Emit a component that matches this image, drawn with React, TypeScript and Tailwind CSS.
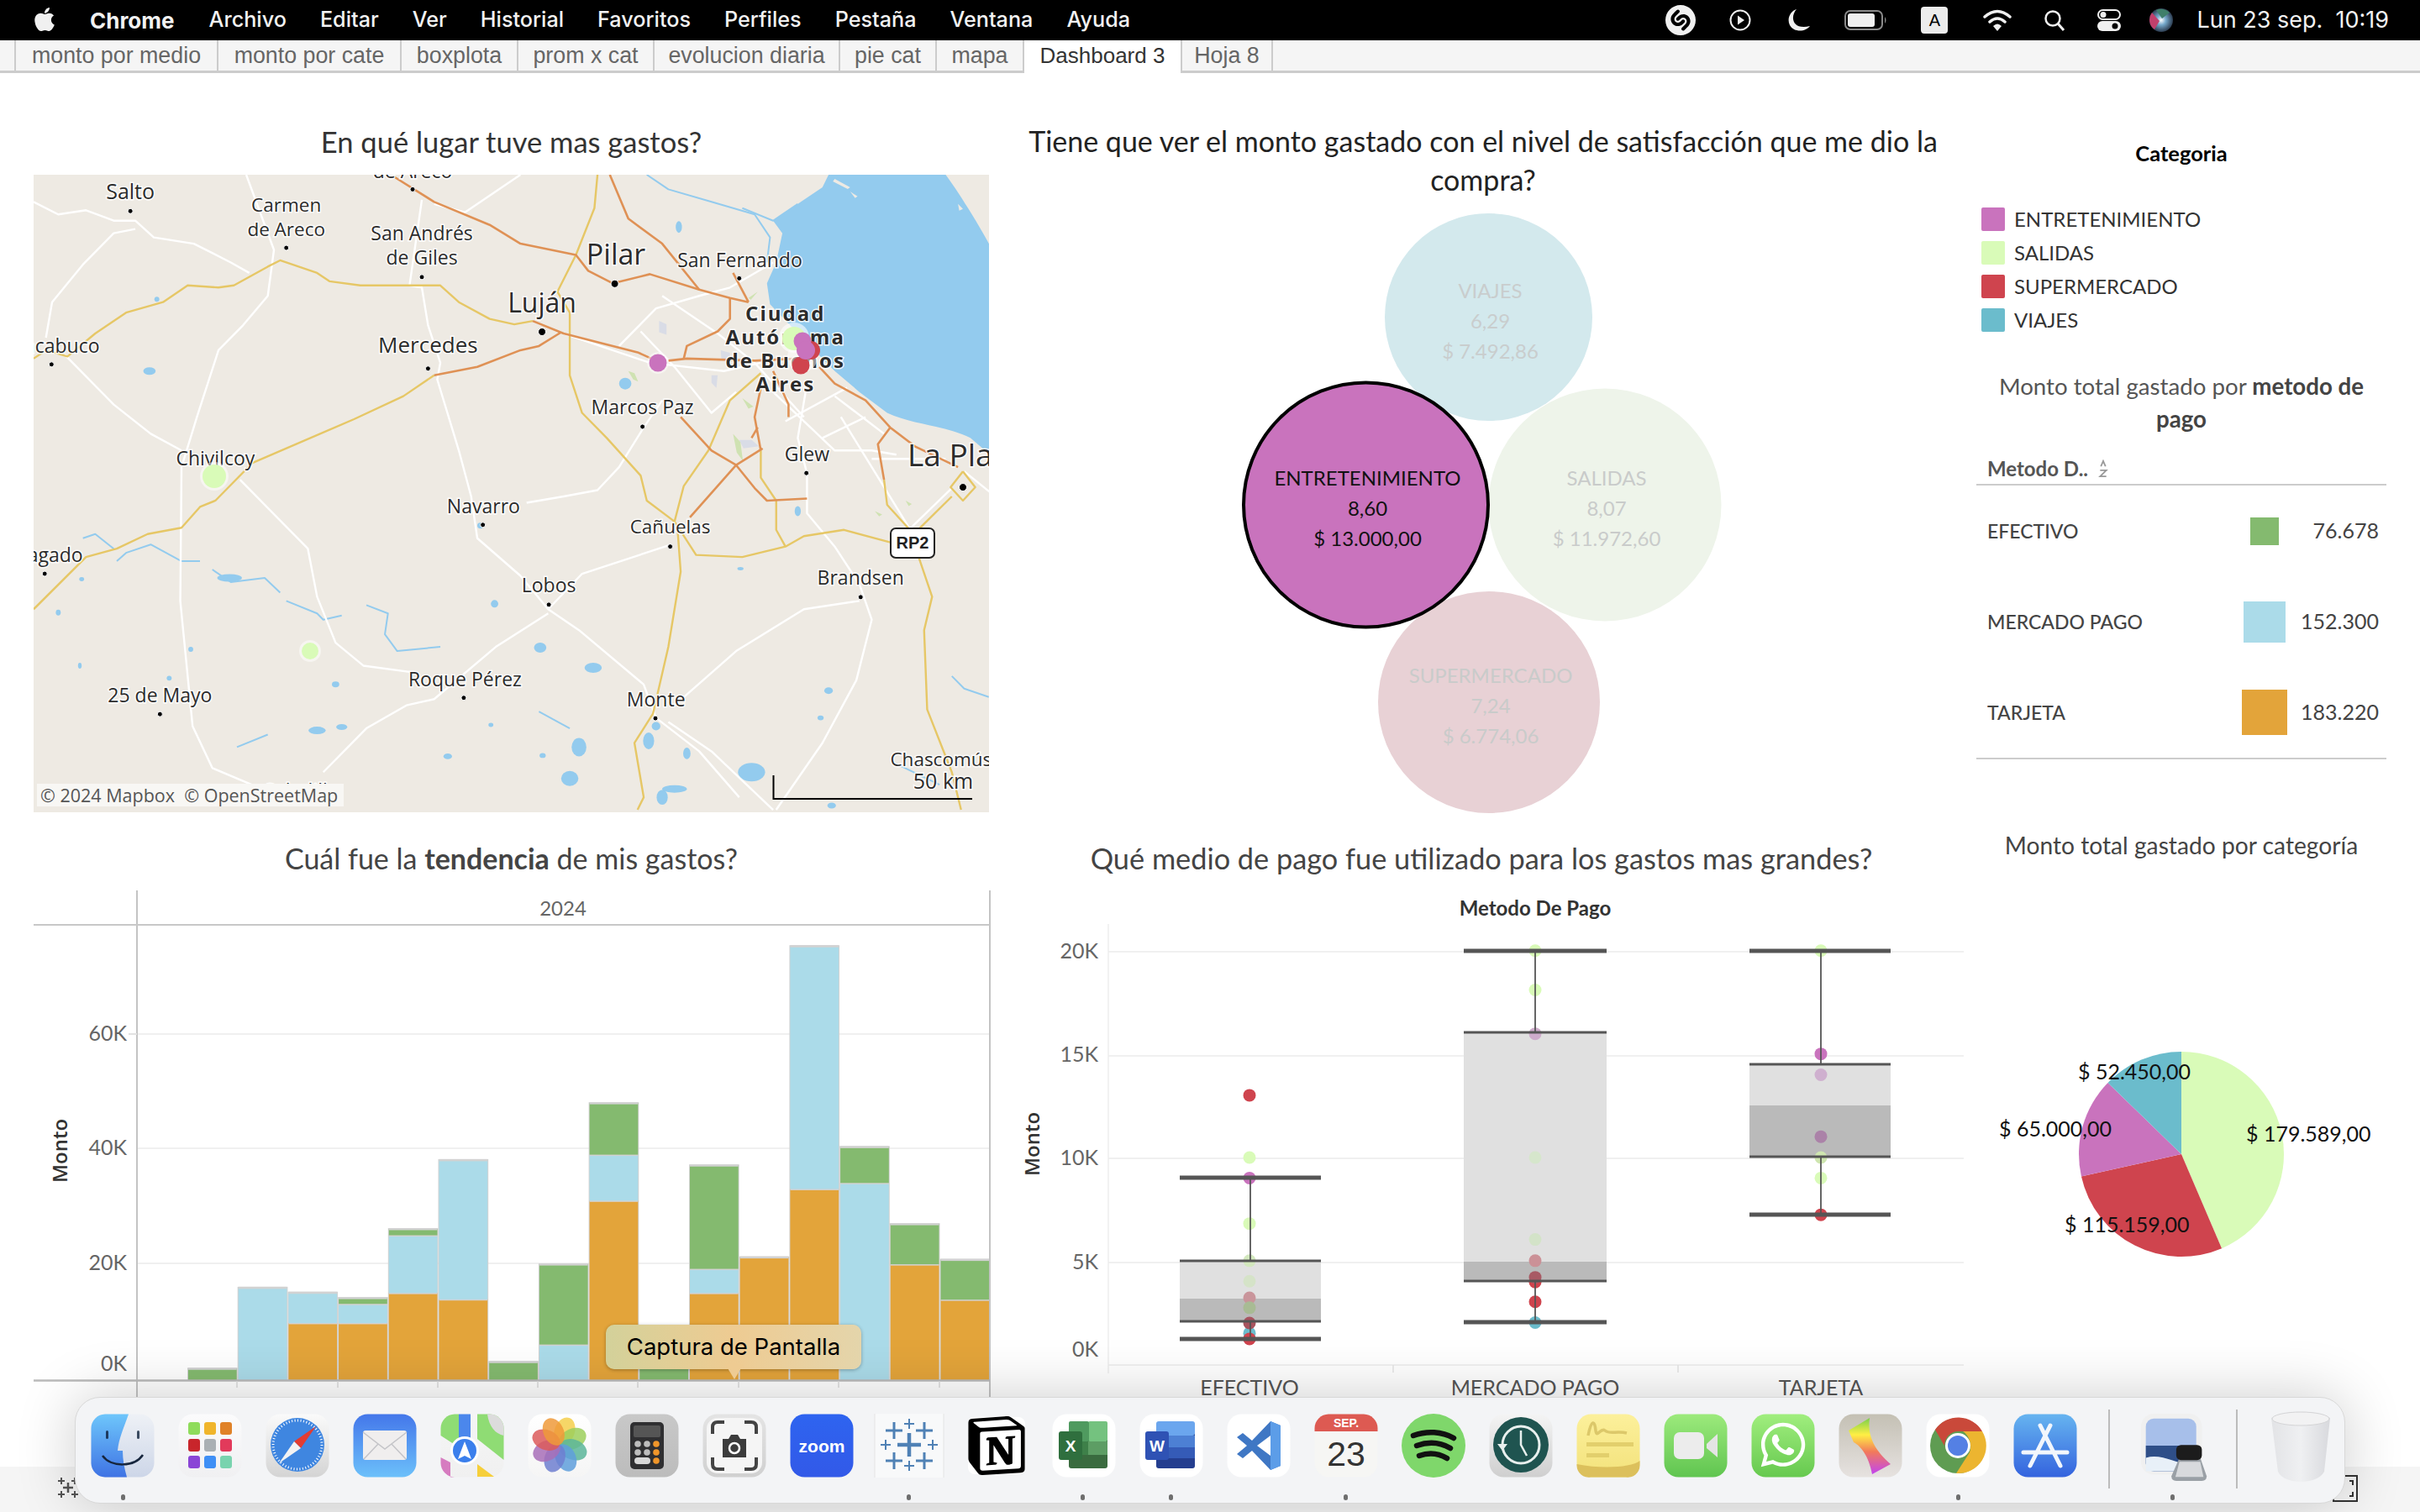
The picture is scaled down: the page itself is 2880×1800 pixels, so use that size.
import React from "react";
import { FaApple, FaWhatsapp } from "react-icons/fa";
import { SiShazam, SiNotion } from "react-icons/si";

const S = 0.7334, T = 0.4974;
const pts = (a: number[]) => { let o = ""; for (let i = 0; i < a.length; i += 2) o += (i ? "L" : "M") + a[i] + " " + a[i + 1] + " "; return o; };

const white = [
  [0,85,40,115,85,105,130,130,165,130,195,170,260,185,320,230,350,255],
  [165,150,130,160,80,235,30,325,20,410],
  [345,20,390,200,380,310,340,380,300,440,265,600,240,720,238,1040,258,1340,290,1440,370,1490],
  [50,450,130,570,190,640,240,680],
  [335,750,445,915,460,1030,490,1140,535,1195,610,1210],
  [630,80,610,285,630,290,640,380,660,470,655,510,690,680,710,790,720,890,790,980,835,1060,885,1110,990,1240,1010,1320,1080,1400,1145,1510],
  [790,20,700,110,650,90],
  [800,805,860,790,915,775,950,720,990,625,1020,560],
  [835,1070,750,1150,650,1275,605,1290,540,1345,470,1450],
  [835,1060,890,975,1035,905],
  [950,430,1010,340,1080,310,1130,290,1200,230],
  [860,400,1000,470,1120,490,1180,470],
  [985,395,1040,480,1100,590,1140,540],
  [1020,310,1110,400,1170,470,1250,600],
  [1255,520,1240,650,1255,735,1255,830,1300,910,1340,1000,1360,1085,1335,1230,1280,1380,1205,1540],
  [1340,1040,1250,1060,1140,1160,1040,1290],
  [1220,610,1320,530],[1280,650,1350,600],[1300,550,1380,640],
  [1200,540,1300,680,1360,680,1400,690],
  [1310,600,1425,875],[1360,700,1480,700],
  [1510,730,1552,780],[1420,870,1490,770],[1030,1330,1100,1400,1200,1540],
];
const yellow = [
  [0,460,20,440,55,455,100,400,150,350,210,325,250,285,300,290,325,285,380,240,400,225,460,255,480,275,530,285,610,285,660,285,690,325,740,365,780,378,810,370],
  [915,20,910,100,880,212,850,300,870,350,870,500,890,590,930,650,985,740,995,800,1040,850,1075,930,1150,935,1220,910,1250,885,1315,870,1390,900],
  [355,710,520,605,600,550,650,500],
  [355,710,295,800,270,815,240,865,185,880,135,915,85,935,0,1060],
  [1040,850,1055,765,1095,680,1130,560,1180,495],
  [1180,680,1180,745,1205,800,1205,870,1220,910],
  [1045,870,1050,970,1030,1150,1005,1310,975,1380,990,1510,980,1540],
  [1380,750,1385,810,1425,875,1435,930,1458,1030,1445,1110,1450,1300,1490,1450,1505,1540],
  [1435,870,1490,790],
  [1508,730,1528,768,1508,800,1488,768,1508,730],
];
const orange = [
  [585,25,650,85,740,140,790,185,880,212,900,250,940,280,1000,258,1080,295,1130,315,1160,325],
  [935,20,965,125,1020,185,1080,295],
  [1135,255,1160,325],
  [1130,315,1130,365,1110,395,1060,430,1055,460],
  [810,370,860,400,980,445,1010,465],
  [1030,465,1060,460,1170,465,1240,460],
  [650,500,720,480,790,440,820,430,855,398],
  [1200,490,1225,570,1225,600],
  [1180,530,1170,600,1180,680],[1165,650,1175,625],
  [1050,600,1100,680,1140,715,1170,770,1190,800,1255,795],
  [1065,840,1140,715,1183,675],
  [1275,480,1300,520,1350,560,1390,625,1430,670,1500,720],
  [1390,625,1370,665,1380,750],
];
const rivers = [
  [995,20,1030,55,1100,85,1170,115,1195,170,1190,230],
  [1150,100,1200,130,1240,90],
  [80,890,100,880,130,915],[135,945,150,925,190,905,240,945,270,945],
  [410,1040,460,1070,470,1085,500,1075],[540,1050,575,1070,570,1120,590,1160,660,1150],
  [290,965,320,995,375,985,400,1020],[820,1305,870,1345],[1490,1220,1510,1250,1550,1270],[330,1390,380,1360],[1400,1430,1470,1480],
];
const lakes = [
  [1047,145,5,14],[188,490,10,9],[960,520,10,14],[318,985,20,9],[725,860,5,7],[748,1047,6,9],[822,1152,10,12],[908,1200,14,12],
  [1010,1340,7,10],[885,1390,12,22],[998,1375,9,20],[1060,1405,6,14],[870,1465,14,18],[1040,1490,20,9],[1165,1450,22,22],[1020,1510,9,18],
  [460,1350,14,9],[500,1342,9,7],[490,1240,6,7],[255,1156,4,6],[40,1068,4,7],[75,1195,3,7],[220,1225,4,6],[1290,1255,7,8],[1277,1320,5,6],
  [672,1412,7,7],[826,1410,5,6],[742,1337,4,5],[1147,963,5,4],[78,988,4,5],[1240,825,5,12],[200,318,4,6],[1295,1530,7,7],
];
const labels: [string, number, number, number][] = [
  ["Salto",157,58,25],["Carmen",410,90,22.5],["de Areco",410,148,22.5],["San Andrés",630,158,23],["de Giles",630,215,23],["de Areco",615,8,23],
  ["Pilar",945,208,34],["San Fernando",1146,222,23],["Luján",825,323,32],["Mercedes",640,425,26],["Marcos Paz",988,574,23],
  ["Chivilcoy",295,695,23],["Glew",1255,686,23],["Navarro",730,810,23],["Cañuelas",1033,860,22.5],["Lobos",836,1000,23],["Brandsen",1342,982,23],
  ["25 de Mayo",205,1262,23],["Roque Pérez",700,1224,23],["Monte",1010,1272,23],["Saladillo",435,1492,23],
];
const dots: [number, number, number][] = [[157,107,3],[410,195,3],[615,55,3],[630,265,3],[943,281,4.5],[1145,268,3],[825,396,4.5],[640,484,3],[29,474,3],[988,623,3],[1254,734,3],[1508,768,4.5],[729,858,3],[1033,910,3],[18,975,3],[836,1049,3],[1342,1031,3],[205,1311,3],[698,1272,3],[1009,1321,3]];

const lx = (x: number) => x * S;
const ly = (y: number) => (y - 20) * T;

function MapLabel({ t, x, y, s, anchor = "middle", bold = false, sp = 0 }: { t: string; x: number; y: number; s: number; anchor?: "middle" | "start" | "end"; bold?: boolean; sp?: number }) {
  return (
    <text x={lx(x)} y={ly(y) + s * 0.36 + 1.5} fontSize={s} textAnchor={anchor} fontWeight={bold ? 700 : 400} letterSpacing={sp} fill="#2b2b2b" stroke="#ffffff" strokeOpacity={0.85} strokeWidth={3} paintOrder="stroke">{t}</text>
  );
}

function MapView() {
  const g = (rows: number[][], c: string, w: number) => rows.map((r, i) => <path key={i} d={pts(r)} fill="none" stroke={c} strokeWidth={w} strokeLinejoin="round" vectorEffect="non-scaling-stroke" />);
  return (
    <div className="relative w-[1137px] h-[759px] overflow-hidden bg-[#eeeae3]">
      <svg viewBox="0 0 1137 759" width="1137" height="759" className="block font-['Open_Sans',sans-serif]">
        <g transform={`scale(${S} ${T}) translate(0 -20)`}>
          <path d="M1290 20 L1480 20 C1500 60 1530 130 1552 190 L1552 690 L1520 650 C1480 620 1430 620 1385 590 L1340 540 L1300 490 L1260 430 L1195 330 L1190 280 L1205 230 L1215 160 L1200 130 L1240 90 L1280 50 Z" fill="#93cbee" />
          <path d="M1500 90 l8 12 l-6 4Z M1300 30 l25 20 l-4 4 l-24 -18Z M1325 60 l12 12 l-4 4Z" fill="#eeeae3" />
          {lakes.map((l, i) => <ellipse key={i} cx={l[0]} cy={l[1]} rx={l[2]} ry={l[3]} fill="#93cbee" />)}
          {g(rivers, "#93cbee", 2)}
          <path d="M1015 370 l12 8 v25 l-12 -6 Z M1115 440 l15 6 v20 l-14 -6Z M1145 655 l20 0 l12 15 l-25 5Z M1100 500 l10 0 l-2 30 l-8 -12Z" fill="#d9dce6" />
          <path d="M965 490 l10 5 l6 20 l-8 -5Z M1135 640 l12 20 l4 45 l-10 -20Z M1150 555 l18 20 l-8 5Z M1365 825 l12 8 l-5 5Z M1415 800 l10 8 l-5 5Z M1175 300 l-15 15 l4 4Z" fill="#cfe2b2" />
          {g(white, "#ffffff", 2.4)}
          {g(yellow, "#e6c766", 2.4)}
          {g(orange, "#df9155", 2.6)}
        </g>
        {dots.map((d, i) => <circle key={i} cx={lx(d[0])} cy={ly(d[1])} r={d[2]} fill="#000" stroke="#fff" strokeWidth={1} />)}
        {labels.map((l, i) => <MapLabel key={i} t={l[0]} x={l[1]} y={l[2]} s={l[3]} />)}
        <MapLabel t="Chacabuco" x={107} y={427} s={23} anchor="end" />
        <MapLabel t="Bragado" x={80} y={927} s={23} anchor="end" />
        <MapLabel t="La Plata" x={1418} y={687} s={37} anchor="start" />
        <MapLabel t="Chascomús" x={1390} y={1417} s={22.5} anchor="start" />
        <MapLabel t="Ciudad" x={1220} y={350} s={24} bold sp={2} />
        <MapLabel t="Autónoma" x={1220} y={406} s={24} bold sp={2} />
        <MapLabel t="de Buenos" x={1220} y={463} s={24} bold sp={2} />
        <MapLabel t="Aires" x={1220} y={519} s={24} bold sp={2} />
        <g fill="none" stroke="#000" strokeWidth={2}><path d="M880.500 715 V743 H1117" /></g>
        <MapLabel t="50 km" x={1476} y={1468} s={25} />
        <rect x={1020} y={421} width={52} height={35} rx={6} fill="#fff" stroke="#222" strokeWidth={2} />
        <text x={1046} y={445} fontSize={20} fontWeight={700} textAnchor="middle" fill="#222" className="font-['Liberation_Sans',sans-serif]">RP2</text>
        <g transform="translate(-40 -208)">
          <circle cx={783} cy={432} r={13} fill="#fff" fillOpacity={0.45} />
          <circle cx={783} cy={432} r={10.500} fill="#c973bd" />
          <circle cx={255} cy={567} r={17} fill="#fff" fillOpacity={0.5} />
          <circle cx={255} cy={567} r={14} fill="#d9fbb8" />
          <circle cx={369} cy={775} r={13} fill="#fff" fillOpacity={0.5} />
          <circle cx={369} cy={775} r={10} fill="#d9fbb8" />
          <circle cx={945} cy={402} r={18} fill="#fff" fillOpacity={0.6} />
          <circle cx={955} cy={425} r={18} fill="#fff" fillOpacity={0.5} />
          <circle cx={945} cy={403} r={14} fill="#d9fbb8" />
          <circle cx={965} cy={417} r={11} fill="#cf444e" />
          <circle cx={953} cy={435} r={10.500} fill="#cf444e" />
          <circle cx={955} cy={406} r={10.500} fill="#c973bd" />
          <circle cx={959} cy={417} r={11} fill="#c973bd" />
        </g>
      </svg>
      <div className="absolute left-[4px] top-[725px] w-[365px] h-[27px] bg-[#f8f7f4] text-[#555] text-[21.500px] leading-[27px] pl-[4px] whitespace-nowrap font-['Open_Sans',sans-serif]">© 2024 Mapbox &nbsp;© OpenStreetMap</div>
    </div>
  );
}

const bars: [number, number, number, string][] = [
  [0,0,1495,"#84ba6f"],[0,0,1266,"#abdbe9"],[1366,1280,0,""],[1366,1312,1295,"#84ba6f"],[1281,1118,1100,"#84ba6f"],[1299,905,0,""],[0,0,1476,"#84ba6f"],[0,1427,1200,"#84ba6f"],
  [1020,890,744,"#84ba6f"],[0,0,1400,"#84ba6f"],[1281,1213,920,"#84ba6f"],[1180,0,0,""],[987,300,0,""],[0,970,868,"#84ba6f"],[1200,0,1086,"#84ba6f"],[1300,0,1187,"#84ba6f"],
];
function Bars() {
  const Y = (z: number) => 1000 + z * 0.4209;
  const base = 1643;
  const w = 59.7;
  const seg = (x: number, top: number, bot: number, c: string, k: string) => (
    <g key={k}><rect x={x + 1} y={top} width={w - 2} height={bot - top} fill={c} /><rect x={x + 1} y={top - 1} width={w - 2} height={2.5} fill="#d2d2d2" /></g>
  );
  return (
    <svg viewBox="40 1060 1142 640" width="1142" height="640" className="block">
      {[1231, 1367, 1504].map(y => <line key={y} x1={163} x2={1178} y1={y} y2={y} stroke="#f0f0f0" strokeWidth={2} />)}
      {bars.map((b, i) => {
        const x = 223 + i * w;
        const out: React.ReactNode[] = [];
        let bot = base;
        const [o, bl, t, c] = b;
        if (o) { out.push(seg(x, Y(o), bot, "#e3a43a", "o")); bot = Y(o); }
        if (bl) { out.push(seg(x, Y(bl), bot, "#abdbe9", "b")); bot = Y(bl); }
        if (t) { out.push(seg(x, Y(t), bot, c, "g")); bot = Y(t); }
        return <g key={i}><rect x={x} y={bot - 1} width={w} height={base - bot + 1} fill="#d2d2d2" />{out}</g>;
      })}
      <line x1={163} x2={163} y1={1060} y2={1700} stroke="#c4c4c4" strokeWidth={2} />
      <line x1={1178} x2={1178} y1={1060} y2={1700} stroke="#c4c4c4" strokeWidth={2} />
      <line x1={40} x2={1178} y1={1101} y2={1101} stroke="#c8c8c8" strokeWidth={2} />
      <line x1={40} x2={1178} y1={1643.500} y2={1643.500} stroke="#bbbbbb" strokeWidth={2.5} />
      {[282, 402, 521, 640, 759, 879, 998, 1118].map(x => <line key={x} x1={x} x2={x} y1={1644} y2={1652} stroke="#dcdcdc" strokeWidth={1.500} />)}
      <text x={670} y={1090} fontSize={24} textAnchor="middle" fill="#666">2024</text>
      {[["60K", 1231], ["40K", 1367], ["20K", 1504], ["0K", 1624]].map(([t, y]) => <text key={t as string} x={151} y={(y as number) + 8} fontSize={25} textAnchor="end" fill="#666">{t}</text>)}
      <line x1={153} x2={163} y1={1231} y2={1231} stroke="#e2e2e2" strokeWidth={2} />
      <text transform="translate(80 1370) rotate(-90)" fontSize={24} fontWeight={600} textAnchor="middle" fill="#333" className="font-['Open_Sans',sans-serif]">Monto</text>
    </svg>
  );
}

const SAL = "#d9fbb8", ENT = "#c973bd", RED = "#cf444e", BLU = "#6bbccc";
const boxDots: [number, number, string][] = [
  [1487,722,RED],[1487,898,SAL],[1487,956,ENT],[1487,1085,SAL],[1487,1190,"#d3e8be"],[1487,1248,"#d5e3c8"],[1487,1295,"#c9959b"],[1487,1323,"#a8bb94"],[1487,1395,BLU],[1487,1366,"#a8545f"],[1487,1411,RED],
  [1827,313,SAL],[1827,424,SAL],[1827,548,"#ceaccb"],[1827,898,"#d6e6cc"],[1827,1130,"#d3e3c8"],[1827,1190,"#cb9197"],[1827,1250,RED],[1827,1237,"#a85a64"],[1827,1306,RED],[1827,1365,BLU],
  [2167,313,SAL],[2167,605,ENT],[2167,664,"#cfb0cf"],[2167,839,"#ab82a8"],[2167,898,"#cfe6b0"],[2167,956,SAL],[2167,1060,RED],
];
const boxes = [
  { x: 1404, w: 168, cx: 1488, top: 1402, q3: 1501, med: 1546, q1: 1573, low: 1594 },
  { x: 1742, w: 170, cx: 1827, top: 1132, q3: 1229, med: 1502, q1: 1525, low: 1574 },
  { x: 2082, w: 168, cx: 2167, top: 1132, q3: 1267, med: 1316, q1: 1377, low: 1446 },
];
function BoxPlot() {
  return (
    <svg viewBox="1190 1060 1160 640" width="1160" height="640" className="block">
      {[1133, 1257, 1379, 1503].map(y => <line key={y} x1={1319} x2={2337} y1={y} y2={y} stroke="#f0f0f0" strokeWidth={2} />)}
      <line x1={1319} x2={1319} y1={1100} y2={1635} stroke="#eeeeee" strokeWidth={1.500} />
      <line x1={1319} x2={2337} y1={1625} y2={1625} stroke="#ececec" strokeWidth={1.500} />
      {[1658, 1997].map(x => <line key={x} x1={x} x2={x} y1={1625} y2={1634} stroke="#e4e4e4" strokeWidth={1.500} />)}
      {boxes.map((b, i) => (
        <g key={i}>
          <rect x={b.x} y={b.q3} width={b.w} height={b.med - b.q3} fill="#e0e0e0" />
          <rect x={b.x} y={b.med} width={b.w} height={b.q1 - b.med} fill="#bababa" />
        </g>
      ))}
      {boxDots.map((d, i) => <circle key={i} cx={d[0]} cy={1000 + d[1] * 0.4209} r={7.500} fill={d[2]} />)}
      {boxes.map((b, i) => (
        <g key={i}>
          <line x1={b.cx} x2={b.cx} y1={b.top} y2={b.q3} stroke="#555" strokeWidth={1.800} />
          <line x1={b.cx} x2={b.cx} y1={b.q1} y2={b.low} stroke="#555" strokeWidth={1.800} />
          <line x1={b.x} x2={b.x + b.w} y1={b.top} y2={b.top} stroke="#555" strokeWidth={5} />
          <line x1={b.x} x2={b.x + b.w} y1={b.low} y2={b.low} stroke="#555" strokeWidth={5} />
          <line x1={b.x} x2={b.x + b.w} y1={b.q3} y2={b.q3} stroke="#555" strokeWidth={3} />
          <line x1={b.x} x2={b.x + b.w} y1={b.q1} y2={b.q1} stroke="#555" strokeWidth={3} />
        </g>
      ))}
      {[["20K", 1132], ["15K", 1255], ["10K", 1378], ["5K", 1502], ["0K", 1606]].map(([t, y]) => <text key={t as string} x={1307} y={(y as number) + 9} fontSize={25} textAnchor="end" fill="#666">{t}</text>)}
      <text x={1827} y={1090} fontSize={24} fontWeight={700} textAnchor="middle" fill="#333">Metodo De Pago</text>
      <text transform="translate(1237 1362) rotate(-90)" fontSize={24} fontWeight={600} textAnchor="middle" fill="#333" className="font-['Open_Sans',sans-serif]">Monto</text>
      {[["EFECTIVO", 1487], ["MERCADO PAGO", 1827], ["TARJETA", 2167]].map(([t, x]) => <text key={t as string} x={x as number} y={1661} fontSize={25} textAnchor="middle" fill="#555">{t}</text>)}
    </svg>
  );
}

function Bubble({ cx, cy, r, fill, lines, color, stroke }: { cx: number; cy: number; r: number; fill: string; lines: string[]; color: string; stroke?: boolean }) {
  const lyy = [cy - 37, cy - 1, cy + 35];
  return (
    <g>
      <circle cx={cx} cy={cy} r={r} fill={fill} stroke={stroke ? "#000" : "none"} strokeWidth={4} />
      {lines.map((l, i) => <text key={i} x={cx + 2} y={lyy[i] + 14} fontSize={24} textAnchor="middle" fill={color}>{l}</text>)}
    </g>
  );
}
function Bubbles() {
  return (
    <svg viewBox="1190 240 1160 730" width="1160" height="730" className="block">
      <Bubble cx={1771.500} cy={377.500} r={123.500} fill="#d3e9ed" color="#c9cdcd" lines={["VIAJES", "6,29", "$ 7.492,86"]} />
      <Bubble cx={1910} cy={601} r={138.500} fill="#eef4ea" color="#c9cbca" lines={["SALIDAS", "8,07", "$ 11.972,60"]} />
      <Bubble cx={1772} cy={836} r={132} fill="#e8d1d5" color="#c9cbca" lines={["SUPERMERCADO", "7,24", "$ 6.774,06"]} />
      <Bubble cx={1625.500} cy={601} r={145.500} fill="#c973bd" color="#111" stroke lines={["ENTRETENIMIENTO", "8,60", "$ 13.000,00"]} />
    </svg>
  );
}

function Pie() {
  const cx = 2596, cy = 1373, r = 122;
  const P = (a: number) => { const t = a * Math.PI / 180; return `${cx + r * Math.sin(t)} ${cy - r * Math.cos(t)}`; };
  const slice = (a: number, b: number, c: string) => <path d={`M${cx} ${cy} L${P(a)} A${r} ${r} 0 ${b - a > 180 ? 1 : 0} 1 ${P(b)} Z`} fill={c} />;
  return (
    <svg viewBox="2352 1227 488 290" width="488" height="290" className="block">
      {slice(0, 156.800, SAL)}
      {slice(156.800, 257.400, RED)}
      {slice(257.400, 314.200, ENT)}
      {slice(314.200, 360, BLU)}
      <g fontSize={25} fill="#111">
        <text x={2473} y={1284}>$ 52.450,00</text>
        <text x={2379} y={1352}>$ 65.000,00</text>
        <text x={2673} y={1358}>$ 179.589,00</text>
        <text x={2457} y={1466}>$ 115.159,00</text>
      </g>
    </svg>
  );
}

function Tile({ children, id, a, b }: { children: React.ReactNode; id: string; a: string; b: string }) {
  return (
    <svg viewBox="0 0 76 76" width="76" height="76" className="block">
      <defs><linearGradient id={id} x1="0" y1="0" x2="0" y2="1"><stop offset="0" stopColor={a} /><stop offset="1" stopColor={b} /></linearGradient></defs>
      <rect x="0.500" y="0.500" width="75" height="75" rx="17" fill={`url(#${id})`} />
      {children}
    </svg>
  );
}
const Cross = ({ x, y, s, w, c = "#4f81b5" }: { x: number; y: number; s: number; w: number; c?: string }) => <path d={`M${x - s} ${y} H${x + s} M${x} ${y - s} V${y + s}`} stroke={c} strokeWidth={w} fill="none" />;

function DockIcons() {
  const icons: React.ReactNode[] = [
    <Tile id="fi" a="#eef1f6" b="#cdd6e8"><defs><linearGradient id="fib" x1="0" y1="0" x2="0" y2="1"><stop offset="0" stopColor="#6ec6fb" /><stop offset="1" stopColor="#3f73e4" /></linearGradient></defs><path d="M17 .5 H45 C40 15 33 30 32 44 H38 C38 55 40 65 43 75.500 H17 A17 17 0 0 1 .5 59 V17 A17 17 0 0 1 17 .5Z" fill="url(#fib)" /><rect x="18" y="20" width="3" height="10" rx="1.500" fill="#1d3a60" /><rect x="55" y="20" width="3" height="10" rx="1.500" fill="#3a4a60" /><path d="M14 50 C24 64 52 64 62 49" fill="none" stroke="#17263d" strokeWidth="2.500" /></Tile>,
    <Tile id="la" a="#fbfbfc" b="#f0f0f2">{[["#8fdc5c", 12, 10], ["#f0b52c", 31, 10], ["#e08228", 50, 10], ["#c8252b", 12, 30], ["#aab0b4", 31, 30], ["#e23a5b", 50, 30], ["#8a45d6", 12, 50], ["#3f8ff5", 31, 50], ["#79d3ae", 50, 50]].map(([c, x, y], i) => <rect key={i} x={x as number} y={y as number} width="14" height="15" rx="3" fill={c as string} />)}</Tile>,
    <Tile id="sa" a="#fafafa" b="#d4d4d4"><circle cx="38" cy="37" r="32" fill="#3f86e0" /><circle cx="38" cy="37" r="29" fill="none" stroke="#fff" strokeWidth="3" strokeDasharray="1 2.500" /><path d="M60 15 L34 33 L42 41Z" fill="#e23c32" /><path d="M16 59 L34 33 L42 41Z" fill="#f3f3f3" /></Tile>,
    <Tile id="ma" a="#4477ea" b="#6cc0fa"><rect x="12" y="20" width="52" height="35" rx="3" fill="#f0eeee" /><path d="M12 22 L38 42 L64 22 M13 54 L30 36 M63 54 L46 36" fill="none" stroke="#c4c4c8" strokeWidth="1.500" /></Tile>,
    <Tile id="mp" a="#f5f5f5" b="#f0f0f0"><path d="M.5 17 A17 17 0 0 1 17 .5 H22 V40 L.5 26Z" fill="#8fdc74" /><path d="M44 0.500 H59 A17 17 0 0 1 75.500 17 V55 L44 30Z" fill="#8fdc74" /><path d="M60 .5 A17 17 0 0 1 75.500 17 L75.500 26 C66 24 58 16 56 .5Z" fill="#dcdcdc" /><rect x="22" y=".5" width="14" height="34" fill="#4b87ec" /><path d="M.5 52 L12 58 V75.500 H17 A17 17 0 0 1 .5 59Z" fill="#d67cc0" /><path d="M44 60 L64 75 H44Z" fill="#f6cf3a" /><circle cx="29" cy="44" r="17" fill="#fff" /><circle cx="29" cy="44" r="14" fill="#3b7fec" /><path d="M29 33 L37 54 L29 50 L21 54Z" fill="#fff" /></Tile>,
    <Tile id="ph" a="#ffffff" b="#f5f5f5">{[["#f4cf4c", 20], ["#9ccf5c", 65], ["#5cb69a", 110], ["#5f9fdc", 155], ["#6e7fd0", 200], ["#a86fb8", 245], ["#dc5a5a", 290], ["#ee9a3a", 335]].map(([c, a], i) => <ellipse key={i} cx="38" cy="20" rx="12" ry="17" fill={c as string} fillOpacity="0.85" transform={`rotate(${a} 38 37)`} />)}</Tile>,
    <Tile id="ca" a="#c8c8c8" b="#bcbcbc"><rect x="18" y="10" width="40" height="56" rx="5" fill="#2f2f31" /><rect x="22" y="14" width="32" height="14" rx="2" fill="#555" />{[36, 46].map(y => [27, 38, 49].map((x, i) => <circle key={`${x}${y}`} cx={x} cy={y} r="3.800" fill={i === 2 ? "#f0962a" : "#bdbdbd"} />))}<rect x="23" y="52" width="19" height="8" rx="4" fill="#d8d8d8" /><circle cx="49" cy="56" r="3.800" fill="#f0962a" /></Tile>,
    <Tile id="sc" a="#e4e4e4" b="#d0d0d0"><rect x="5" y="5" width="66" height="66" rx="13" fill="#f5f5f5" /><path d="M12 24 V16 Q12 10 18 10 H26 M50 10 H58 Q64 10 64 16 V24 M12 52 V60 Q12 66 18 66 H26 M50 66 H58 Q64 66 64 60 V52" fill="none" stroke="#444" strokeWidth="4" /><path d="M24 30 H31 L34 25 H42 L45 30 H52 V52 H24Z" fill="#3c3c3c" /><circle cx="38" cy="41" r="6" fill="none" stroke="#fff" strokeWidth="2.500" /></Tile>,
    <Tile id="zm" a="#2e64f0" b="#3259e8"><text x="38" y="46" fontSize="21" fontWeight="700" textAnchor="middle" fill="#fff" className="font-['Liberation_Sans',sans-serif]">zoom</text></Tile>,
    <svg viewBox="0 0 84 76" width="84" height="76" className="block -mx-[4px]"><rect x="1" y="-2" width="82" height="80" fill="#f8f9fa" stroke="#e4e4e4" /><Cross x={42} y={37} s={14} w={4.500} /><Cross x={24} y={20} s={10} w={3} /><Cross x={60} y={20} s={10} w={3} /><Cross x={24} y={56} s={10} w={3} /><Cross x={60} y={56} s={10} w={3} /><Cross x={42} y={12} s={6} w={2} /><Cross x={42} y={62} s={6} w={2} /><Cross x={14} y={37} s={6} w={2} /><Cross x={70} y={37} s={6} w={2} /></svg>,
    <svg viewBox="0 0 76 76" width="76" height="76" className="block"><rect x="4" y="4" width="68" height="68" rx="8" fill="#fff" /><SiNotion x="3" y="3" size={70} color="#000" /></svg>,
    <Tile id="ex" a="#ffffff" b="#ffffff"><rect x="20" y="21" width="46" height="44" rx="3" fill="#3a6b3f" /><rect x="43" y="9" width="23" height="24" rx="2" fill="#74c27f" /><rect x="20" y="9" width="24" height="24" rx="2" fill="#4f9a5f" /><rect x="43" y="33" width="23" height="16" fill="#5d9d64" /><rect x="20" y="33" width="23" height="16" fill="#3e8049" /><rect x="8" y="21" width="28" height="34" rx="3" fill="#2f6f3e" /><text x="22" y="45" fontSize="19" fontWeight="700" textAnchor="middle" fill="#fff" className="font-['Liberation_Sans',sans-serif]">X</text></Tile>,
    <Tile id="wo" a="#ffffff" b="#ffffff"><rect x="20" y="21" width="46" height="44" rx="3" fill="#243e8f" /><rect x="20" y="9" width="46" height="17" rx="3" fill="#6ba6ee" /><rect x="20" y="26" width="46" height="14" fill="#4d80d4" /><rect x="20" y="40" width="46" height="13" fill="#355bb7" /><rect x="7" y="21" width="28" height="34" rx="3" fill="#2f52b4" /><text x="21" y="45" fontSize="19" fontWeight="700" textAnchor="middle" fill="#fff" className="font-['Liberation_Sans',sans-serif]">W</text></Tile>,
    <Tile id="vs" a="#ffffff" b="#ffffff"><path d="M52 9 L64 14 V62 L52 67 L30 44 L19 53 L12 48 L24 38 L12 28 L19 23 L30 32Z" fill="#3f77c4" /><path d="M52 9 L64 14 V62 L52 67Z" fill="#5c9de8" /><path d="M52 26 V50 L36 38Z" fill="#fff" /></Tile>,
    <svg viewBox="0 0 76 76" width="76" height="76" className="block"><rect x=".5" y=".5" width="75" height="75" rx="17" fill="#f6f6f4" /><path d="M.5 17 A17 17 0 0 1 17 .5 H59 A17 17 0 0 1 75.500 17 V21 H.5Z" fill="#dd5a52" /><text x="38" y="16" fontSize="14" fontWeight="700" textAnchor="middle" fill="#fff" className="font-['Liberation_Sans',sans-serif]">SEP.</text><text x="38" y="62" fontSize="41" textAnchor="middle" fill="#333" className="font-['Liberation_Sans',sans-serif]">23</text></svg>,
    <svg viewBox="0 0 76 76" width="76" height="76" className="block"><circle cx="38" cy="38" r="38" fill="#7fd76b" /><path d="M14 26 C30 20 48 21 62 29 M18 38 C32 33 46 34 58 41 M21 50 C32 46 44 47 54 53" fill="none" stroke="#111" strokeWidth="6.500" strokeLinecap="round" /></svg>,
    <Tile id="tm" a="#f4f4f4" b="#cfcfcf"><circle cx="38" cy="37" r="33" fill="#1f5450" /><circle cx="38" cy="37" r="22" fill="none" stroke="#e8f0ee" strokeWidth="3" /><path d="M38 20 V37 L45 50" fill="none" stroke="#e8f0ee" strokeWidth="2.500" /><path d="M10 36 H22 L16 44Z" fill="#e8f0ee" /></Tile>,
    <Tile id="no" a="#fcf09b" b="#f3e27c"><path d="M0.500 60 V62 A14 14 0 0 0 17 75.500 H59 A14 14 0 0 0 75.500 62 V56 C66 64 30 66 .5 60Z" fill="#dcc05c" /><path d="M14 26 C18 6 22 8 23 20 C24 30 29 16 34 20 C40 25 48 20 60 23" fill="none" stroke="#dcc86a" strokeWidth="3.500" /><rect x="12" y="34" width="56" height="5" fill="#e2cf6c" /><rect x="12" y="47" width="27" height="5" fill="#e2cf6c" /></Tile>,
    <Tile id="fa" a="#9cea7c" b="#60c550"><rect x="12" y="22" width="36" height="32" rx="7" fill="#ececec" /><path d="M51 36 L64 24 V52 L51 41Z" fill="#e4e4e4" /></Tile>,
    <Tile id="wa" a="#a0ee7e" b="#66c94f"><foreignObject x="8" y="7" width="60" height="62"><FaWhatsapp size={60} color="#fff" /></foreignObject></Tile>,
    <Tile id="gr" a="#c4c0b4" b="#e6e2e0"><defs><linearGradient id="grr" x1="0" y1="0" x2="0" y2="1"><stop offset="0" stopColor="#79d04a" /><stop offset="0.3" stopColor="#ffef44" /><stop offset="0.6" stopColor="#f27a5a" /><stop offset="1" stopColor="#c244f0" /></linearGradient></defs><path d="M12 20 L37 5 C34 28 44 44 62 60 L40 72 C36 50 26 38 18 34Z" fill="url(#grr)" /></Tile>,
    <Tile id="ch" a="#ffffff" b="#ffffff"><circle cx="38" cy="38" r="33" fill="#5f9c52" /><path d="M11 19 A33 33 0 0 1 67 21 L38 21 C30 21 22 28 22 38Z" fill="#c9493a" /><path d="M67 21 A33 33 0 0 1 36 71 L52 46 C55 38 52 26 44 21Z" fill="#ecb530" /><circle cx="38" cy="38" r="15" fill="#fff" /><circle cx="38" cy="38" r="12" fill="#5480e4" /></Tile>,
    <Tile id="ap" a="#66b4f0" b="#3463de"><path d="M44 14 L20 62 M32 14 L56 62 M12 46 H64" fill="none" stroke="#f2f6fc" strokeWidth="5" strokeLinecap="round" /></Tile>,
  ];
  return <>{icons.map((n, i) => <div key={i} className="relative w-[76px] h-[76px] shrink-0">{n}</div>)}</>;
}

function Dock() {
  return (
    <div className="absolute left-[89px] top-[1663px] w-[2702px] h-[127px] rounded-[30px] bg-[#f3f4f6] border border-[#d8d8d8] shadow-[0_0_70px_rgba(0,0,0,0.2)] pl-[18px] pt-[19px]">
      <div className="flex items-start gap-[28px]">
        <DockIcons />
        <div className="w-[2px] h-[94px] -mt-[5px] mx-[9px] bg-[#bcbcbc] shrink-0" />
        <div className="relative w-[76px] h-[76px] shrink-0">
          <svg viewBox="0 0 84 84" width="80" height="80" className="block">
            <rect x="0" y="0" width="76" height="76" rx="16" fill="#f0f0f0" />
            <rect x="6" y="6" width="63" height="66" rx="10" fill="#a7bfea" />
            <path d="M6 40 H69 V62 A10 10 0 0 1 59 72 H16 A10 10 0 0 1 6 62Z" fill="#2f4f88" />
            <path d="M6 55 C25 50 40 60 69 68 V72 H6Z" fill="#e8f0f8" />
            <path d="M48 55 H74 L82 78 Q82 84 76 84 H44 Q38 84 38 78Z" fill="#9aa0a6" />
            <path d="M48 60 H74 L78 79 H43Z" fill="#d8dadd" />
            <rect x="44" y="39" width="32" height="19" rx="6" fill="#1c1c1c" />
          </svg>
        </div>
        <div className="w-[2px] h-[94px] -mt-[5px] mx-[9px] bg-[#bcbcbc] shrink-0" />
        <div className="relative w-[76px] h-[76px] shrink-0">
          <svg viewBox="0 0 76 84" width="76" height="84" className="block -mt-[3px]">
            <defs><linearGradient id="tr" x1="0" y1="0" x2="1" y2="0"><stop offset="0" stopColor="#e2e3e6" /><stop offset="0.5" stopColor="#eff0f2" /><stop offset="1" stopColor="#d8d9dd" /></linearGradient></defs>
            <path d="M3 8 C20 -2 56 -2 73 8 L66 72 C58 88 18 88 11 72Z" fill="url(#tr)" />
            <ellipse cx="38" cy="9" rx="34" ry="8" fill="#f2f2f3" stroke="#d4d4d6" />
          </svg>
        </div>
      </div>
      {[54, 989, 1196, 1301, 1509, 2238, 2493].map(x => <div key={x} className="absolute top-[115px] w-[5px] h-[7px] rounded-full bg-[#6e6e6e]" style={{ left: x }} />)}
    </div>
  );
}

const tabs: [string, string][] = [
  ["monto por medio", "w-[241px]"], ["monto por cate", "w-[218px]"], ["boxplota", "w-[139px]"], ["prom x cat", "w-[162px]"],
  ["evolucion diaria", "w-[221px]"], ["pie cat", "w-[115px]"], ["mapa", "w-[104px]"],
];

function MenuBar() {
  const items = ["Archivo", "Editar", "Ver", "Historial", "Favoritos", "Perfiles", "Pestaña", "Ventana", "Ayuda"];
  return (
    <div className="flex items-center h-[48px] bg-black text-[#f2f2f2] text-[25.200px] font-['Inter',sans-serif]">
      <FaApple className="ml-[37px] w-[32px] h-[32px] -mt-[3px]" color="#f0f0f0" />
      <span className="ml-[38px] font-bold text-[26px]">Chrome</span>
      <div className="flex gap-[40px] ml-[41px] font-medium">{items.map(t => <span key={t}>{t}</span>)}</div>
      <div className="ml-auto flex items-center h-full pr-[37px]">
        <SiShazam size={36} color="#f0f0f0" />
        <svg viewBox="0 0 26 26" width="26" height="26" className="ml-[40px]"><circle cx="13" cy="13" r="11.500" fill="none" stroke="#f0f0f0" strokeWidth="2" /><path d="M10 7.500 L18 13 L10 18.500Z" fill="#f0f0f0" /></svg>
        <svg viewBox="0 0 28 28" width="28" height="28" className="ml-[43px]"><path d="M11 1 C3 10 6 26 27 21 C22 28 8 29 3 20 C-1 12 4 3 11 1Z" fill="#f0f0f0" /></svg>
        <svg viewBox="0 0 52 24" width="52" height="24" className="ml-[40px]"><rect x="1" y="1" width="44" height="22" rx="6" fill="none" stroke="#8a8a8a" strokeWidth="2" /><rect x="4" y="4" width="32" height="16" rx="3" fill="#f0f0f0" /><path d="M48 8 Q51 12 48 16Z" fill="#8a8a8a" /></svg>
        <div className="ml-[39px] w-[32px] h-[32px] rounded-[4px] bg-[#ececec] text-black text-[20px] flex items-center justify-center font-['Liberation_Sans',sans-serif]">A</div>
        <svg viewBox="0 0 34 26" width="34" height="26" className="ml-[42px]"><path d="M2 9 Q17 -4 32 9 M8 15 Q17 7 26 15" fill="none" stroke="#f0f0f0" strokeWidth="3.500" strokeLinecap="round" /><path d="M12 20 Q17 15 22 20 L17 26Z" fill="#f0f0f0" /></svg>
        <svg viewBox="0 0 26 26" width="26" height="26" className="ml-[38px]"><circle cx="11" cy="11" r="8.500" fill="none" stroke="#f0f0f0" strokeWidth="2.500" /><path d="M17 17 L24 25" stroke="#f0f0f0" strokeWidth="3" /></svg>
        <svg viewBox="0 0 28 26" width="28" height="26" className="ml-[38px]"><rect x="1" y="1" width="26" height="11" rx="5.500" fill="none" stroke="#f0f0f0" strokeWidth="2" /><circle cx="7" cy="6.500" r="3.500" fill="#f0f0f0" /><rect x="0" y="14" width="28" height="12" rx="6" fill="#f0f0f0" /><circle cx="21" cy="20" r="3.500" fill="#000" /></svg>
        <svg viewBox="0 0 28 28" width="28" height="28" className="ml-[34px]"><defs><radialGradient id="si"><stop offset="0" stopColor="#fff" /><stop offset="0.4" stopColor="#7ac" /><stop offset="1" stopColor="#2c3c50" /></radialGradient></defs><circle cx="14" cy="14" r="14" fill="url(#si)" /><path d="M3 5 A14 14 0 0 0 6 25 L12 15Z" fill="#c0406c" /><path d="M8 2 A14 14 0 0 1 24 5 L15 12Z" fill="#3f7f6a" /></svg>
        <span className="ml-[28px] whitespace-pre text-[27px]">Lun 23 sep.  10:19</span>
      </div>
    </div>
  );
}

function TabStrip() {
  return (
    <div className="flex h-[39px] bg-[#f5f5f5] text-[26.800px] leading-[36px] text-[#666] font-['Liberation_Sans',sans-serif]">
      <div className="w-[17px] border-b-[3px] border-[#cccccc]" />
      {tabs.map(([t, w]) => <div key={t} className={`${w} text-center border-l-2 border-b-[3px] border-[#cccccc] whitespace-nowrap`}>{t}</div>)}
      <div className="w-[188px] text-center text-[26px] bg-white text-[#333] whitespace-nowrap border-l-2 border-[#cccccc]">Dashboard 3</div>
      <div className="w-[110px] text-center border-l-2 border-r-2 border-b-[3px] border-[#cccccc] whitespace-nowrap">Hoja 8</div>
      <div className="flex-1 border-b-[3px] border-[#cccccc]" />
    </div>
  );
}

function Legend() {
  const rows: [string, string][] = [["ENTRETENIMIENTO", "bg-[#c973bd]"], ["SALIDAS", "bg-[#d9fbb8]"], ["SUPERMERCADO", "bg-[#cf444e]"], ["VIAJES", "bg-[#6bbccc]"]];
  return (
    <div className="mt-[44px] pl-[6px] flex flex-col">
      {rows.map(([t, c]) => (
        <div key={t} className="flex items-center h-[40px] gap-[11px] text-[24px] text-[#333]"><div className={`w-[28px] h-[28px] rounded-[2px] ${c}`} />{t}</div>
      ))}
    </div>
  );
}

function PayRow({ label, sq, value }: { label: string; sq: string; value: string }) {
  return (
    <div className="flex items-center h-[108px] pl-[13px] pr-[9px] text-[25px] text-[#444]">
      <div className="flex-1 font-medium text-[23px]">{label}</div>
      <div className="w-[54px] flex justify-center"><div className={sq} /></div>
      <div className="w-[109px] text-right">{value}</div>
    </div>
  );
}

export default function App() {
  return (
    <div className="relative w-[2880px] h-[1800px] overflow-hidden bg-white font-['Lato',sans-serif]">
      <MenuBar />
      <TabStrip />
      <div className="flex">
        <div className="w-[1190px] shrink-0 pl-[40px]">
          <h2 className="mt-[43px] w-[1137px] h-[78px] flex items-center justify-center text-[34.500px] text-[#333] font-normal">En qué lugar tuve mas gastos?</h2>
          <MapView />
          <h2 className="mt-[16px] w-[1137px] h-[77px] flex items-center justify-center text-[34px] text-[#444] font-normal whitespace-pre">Cuál fue la <b className="font-bold">tendencia</b> de mis gastos?</h2>
          <Bars />
        </div>
        <div className="w-[1160px] shrink-0">
          <h2 className="mt-[58px] w-[1150px] h-[95px] text-center text-[34px] leading-[46px] text-[#222] font-normal">Tiene que ver el monto gastado con el nivel de satisfacción que me dio la<br />compra?</h2>
          <Bubbles />
          <h2 className="mt-[13px] w-[1146px] h-[77px] flex items-center justify-center text-[34.300px] text-[#444] font-normal">Qué medio de pago fue utilizado para los gastos mas grandes?</h2>
          <BoxPlot />
        </div>
        <div className="absolute left-[2352px] top-[87px] w-[488px]">
          <div className="mt-[80px] h-[30px] leading-[30px] text-center text-[25.500px] font-bold text-black">Categoria</div>
          <Legend />
          <div className="mt-[40px] text-center text-[27.700px] leading-[38.500px] text-[#555]">Monto total gastado por <b className="font-bold text-[#444]">metodo de pago</b></div>
          <div className="mt-[22px] h-[38px] flex items-center gap-[12px] pl-[13px] border-b-2 border-[#cccccc] text-[24px] font-bold text-[#555]">
            <span>Metodo D..</span>
            <svg viewBox="0 0 12 24" width="12" height="22"><path d="M3 9 L6 2 L9 9 M2 14 H10 L2 22 H10" fill="none" stroke="#999" strokeWidth="2" /></svg>
          </div>
          <div className="border-b-2 border-[#cccccc]">
            <PayRow label="EFECTIVO" sq="w-[34px] h-[33px] bg-[#84ba6f]" value="76.678" />
            <PayRow label="MERCADO PAGO" sq="w-[50px] h-[49px] bg-[#abdbe9]" value="152.300" />
            <PayRow label="TARJETA" sq="w-[54px] h-[54px] bg-[#e3a43a]" value="183.220" />
          </div>
          <div className="mt-[82px] h-[40px] leading-[40px] text-center text-[28.200px] text-[#444]">Monto total gastado por categoría</div>
          <div className="mt-[202px]"><Pie /></div>
        </div>
      </div>

      <div className="absolute left-0 right-0 top-[1746px] h-[54px] bg-[#f5f5f5] flex items-end justify-between pl-[66px] pr-[74px] pb-[12px]">
        <svg viewBox="0 0 30 34" width="30" height="34"><Cross x={15} y={17} s={6} w={2.500} c="#555" /><Cross x={7} y={9} s={4} w={2} c="#555" /><Cross x={23} y={9} s={4} w={2} c="#555" /><Cross x={7} y={25} s={4} w={2} c="#555" /><Cross x={23} y={25} s={4} w={2} c="#555" /></svg>
        <svg viewBox="0 0 30 32" width="30" height="32"><rect x="1" y="1" width="28" height="30" fill="none" stroke="#333" strokeWidth="2" /><path d="M20 7 H24 V12 M20 25 H24 V20" fill="none" stroke="#333" strokeWidth="2" /></svg>
      </div>

      <Dock />

      <div className="absolute left-[721px] top-[1577px] w-[304px] h-[53px] rounded-[10px] bg-gradient-to-r from-[#d3d19a] via-[#eecb92] to-[#e4d5ab] shadow-[0_1px_4px_rgba(0,0,0,0.3)] flex items-center justify-center text-[27.500px] text-black font-['Inter',sans-serif]">
        Captura de Pantalla
        <div className="absolute left-[142px] top-[47px] w-[22px] h-[18px] bg-[#eecb92] [clip-path:polygon(0_0,100%_0,50%_100%)]" />
      </div>
    </div>
  );
}
